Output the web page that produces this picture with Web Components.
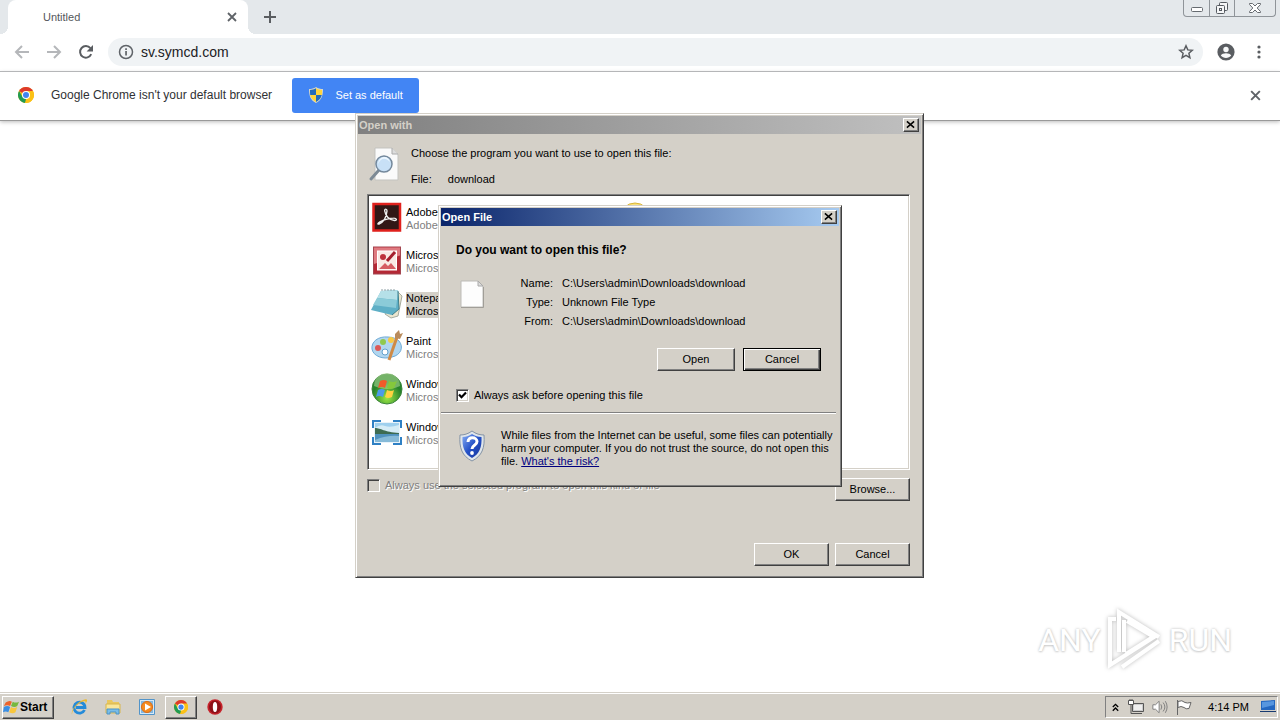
<!DOCTYPE html>
<html lang="en">
<head>
<meta charset="utf-8">
<title>Untitled</title>
<style>
	body {
		margin: 0;
		font: 11px/13px "Liberation Sans", Arial, sans-serif;
		color: #000;
		background: #fff;
	}
</style>
</head>
<body>
<desk-top></desk-top>

<script>
const icons = {
	back: ['0 0 16 16', '<path d="M15 8H2M8 2L2 8l6 6" fill="none" stroke="#b5b7ba" stroke-width="2"/>'],
	forward: ['0 0 16 16', '<path d="M1 8h13M8 2l6 6-6 6" fill="none" stroke="#b5b7ba" stroke-width="2"/>'],
	reload: ['0 0 16 16', '<path d="M13.2 10.2A5.8 5.8 0 1 1 12.4 4.2" fill="none" stroke="#5a5d61" stroke-width="2"/><path d="M15 1v6.400H8.600z" fill="#5a5d61"/>'],
	info: ['0 0 16 16', '<circle cx="8" cy="8" r="6.500" fill="none" stroke="#5f6368" stroke-width="1.500"/><path d="M7.200 7h1.700v4.500H7.200zM7.200 4.300h1.700V6H7.200z" fill="#5f6368"/>'],
	star: ['0 0 16 16', '<path d="M8 1.800l1.800 4.100 4.500.4-3.400 3 1 4.400L8 11.400l-3.900 2.300 1-4.400-3.400-3 4.500-.4z" fill="none" stroke="#5a5d61" stroke-width="1.500"/>'],
	user: ['0 0 18 18', '<circle cx="9" cy="9" r="8.600" fill="#5a5d61"/><circle cx="9" cy="6.500" r="2.700" fill="#f8f9fa"/><path d="M3.800 12.600c1.500-3 8.900-3 10.400 0-2.400 3.300-8 3.300-10.400 0z" fill="#f8f9fa"/>'],
	dots: ['0 0 16 16', '<g fill="#5a5d61"><circle cx="8" cy="3" r="1.600"/><circle cx="8" cy="8" r="1.600"/><circle cx="8" cy="13" r="1.600"/></g>'],
	cross: ['0 0 12 12', '<path d="M2 2l8 8M10 2l-8 8" stroke="#5f6368" stroke-width="1.800"/>'],
	plus: ['0 0 14 14', '<path d="M7 1v12M1 7h12" stroke="#5a5d61" stroke-width="2"/>'],
	close: ['0 0 10 9', '<path d="M1 1l8 7M9 1L1 8" stroke="#000" stroke-width="1.700"/>'],
	min: ['0 0 14 8', '<rect x="1.500" y="3.500" width="11" height="4" rx="1" fill="#fff" stroke="#666b70"/>'],
	restore: ['0 0 14 14', '<g fill="#f5f6f7" stroke="#555a60"><rect x="4.500" y="1.500" width="8" height="8" rx="1"/><rect x="1.500" y="4.500" width="8" height="8" rx="1"/><rect x="4.500" y="7.500" width="2" height="2"/></g>'],
	quit: ['0 0 14 12', '<path d="M1.500 1.500h3L7 4l2.500-2.500h3v1L9.200 6l3.300 3.500v1h-3L7 8l-2.500 2.500h-3v-1L4.800 6 1.500 2.500z" fill="#fff" stroke="#666b70"/>'],
	chrome: ['0 0 16 16', '<circle cx="8" cy="8" r="8" fill="#fbc116"/><path d="M8 8L1.070 4A8 8 0 0 1 14.930 4z" fill="#dd3a2b"/><path d="M8 8v4L7 15.940A8 8 0 0 1 1.070 4l3.500 6z" fill="#219b52"/><path d="M8 4h6.930A8 8 0 0 1 7 15.940L11.500 10z" fill="#fbc116"/><circle cx="8" cy="8" r="4" fill="#fff"/><circle cx="8" cy="8" r="3" fill="#4184ef"/>'],
	uac: ['0 0 14 16', '<path d="M7 0c2 1.500 4.500 2 7 2 0 6-1 11-7 14C1 13 0 8 0 2c2.500 0 5-.5 7-2z" fill="#d8d8c8"/><path d="M7 1.300V8H1.200C1 6.400 1 4.600 1 3c2.200 0 4.200-.5 6-1.700zM7 8h5.800c-.7 3-2.500 5.300-5.800 6.900z" fill="#236bbb"/><path d="M7 1.300C8.800 2.500 10.800 3 13 3c0 1.600 0 3.400-.2 5H7zM7 8v6.900C3.700 13.300 1.900 11 1.200 8z" fill="#ffd53c"/>'],
	search: ['0 0 34 36', '<path d="M7 2h17l6 6v26H7z" fill="#fafafa" stroke="#c3c3bf"/><path d="M24 2v6h6" fill="#ddd" stroke="#aaa"/><path d="M11 24L3 33" stroke="#7d8a95" stroke-width="3" stroke-linecap="round"/><circle cx="16" cy="18" r="8" fill="#c8e0f6" stroke="#74889b" stroke-width="1.500"/><path d="M10 18c3-6 7-7 12-2-2-8-11-6-12 2z" fill="#edf7ff"/>'],
	page: ['0 0 24 28', '<path d="M1 1h17l5 5v21H1z" fill="#fdfdfd" stroke="#bdbcb8"/><path d="M18 1v5h5z" fill="#ddd" stroke="#aaa"/><path d="M1 27.500h22.500V7" fill="none" stroke="#a19e98"/>'],
	adobe: ['0 0 32 32', '<rect x="2.500" y="3" width="26.500" height="26.500" fill="#311716" stroke="#e0211d" stroke-width="2.500"/><path d="M8 23c5-2 7.500-8 8-13 0-2.500-2.600-2.500-2.300 0 .8 5 4.600 9 9.900 9.500 3-.2 2-2.500-1-2.400-4.600 0-9.200 1.500-13.700 3.700-2.500 1.400-2.500 2.700-.9 2.200z" fill="none" stroke="#eee" stroke-width="1.400"/>'],
	picture: ['0 0 32 32', '<rect x="2.500" y="3" width="27" height="27" fill="#b42835" stroke="#a34650"/><path d="M3 3.500h26v8L3 20z" fill="#df7a80"/><rect x="6.500" y="7" width="19" height="19" fill="#f9e9e5" stroke="#fff"/><circle cx="12" cy="13" r="3" fill="#bd313c"/><path d="M16 17l8-9" stroke="#a51e2d" stroke-width="3"/><path d="M8 25l6-6 3 3 3-3 5 6z" fill="#d65b62"/>'],
	notepad: ['0 0 32 32', '<path d="M26 4l5 5-4 20-7 2-6-4z" fill="#ece6cf" stroke="#a7aca0"/><path d="M10 4l17-1 1 19-7 6L0 23z" fill="#5eafc6"/><path d="M10 4l17-1-1 10-20-2z" fill="#b5e0e8"/><path d="M6 11l20 2-1 8L2 18z" fill="#8bcbd8"/><path d="M11 4V2m3 2V2m3 2V2m3 2V2m3 2V2" stroke="#8fa1a6"/><path d="M27 4l1 18-7 6" fill="none" stroke="#3f7e8b"/>'],
	paint: ['0 0 32 32', '<path d="M17 7C7 6 0 12 1 19c1 7 11 11 20 8 9-2 12-10 7-16-2-2-6-4-11-4z" fill="#b1d6ef" stroke="#6eaad6"/><circle cx="12" cy="12" r="3" fill="#91c94e"/><circle cx="20" cy="10" r="3" fill="#f8ca45"/><circle cx="7" cy="18" r="3" fill="#dc5957"/><circle cx="14" cy="22" r="3" fill="#fff" stroke="#63a0cb"/><path d="M18 30L26 7" stroke="#d08a45" stroke-width="3"/><path d="M24 8l0-4 4-4 1 4 3-1-3 6z" fill="#b98b5c"/>'],
	media: ['0 0 32 32', '<defs><radialGradient id="g" cy=".8"><stop stop-color="#9ae745"/><stop offset="1" stop-color="#28832a"/></radialGradient></defs><circle cx="16" cy="16" r="15" fill="url(#g)" stroke="#3b843a"/><path d="M3 13a13 13 0 0 1 26 0c-8 4-17 4-26 0z" fill="#c0e4a6" opacity=".5"/><path d="M9 8q4-2 7 0l-2 7q-3-2-7 0z" fill="#f05a2a"/><path d="M18 8q4 2 8 0l-3 7q-4 2-7 0z" fill="#85c83c"/><path d="M7 17q4-2 7 0l-2 7q-4-2-7 0z" fill="#4c9bea"/><path d="M16 17q4 2 7 0l-2 7q-4 2-7 0z" fill="#ffd241"/>'],
	photo: ['0 0 32 32', '<path d="M1 4h9v4H5v4H1zM22 4h9v8h-4V8h-5zM1 21h4v5h5v3H1zM27 21h4v8h-9v-3h5z" fill="#2f80c4"/><rect x="3.500" y="6.500" width="25" height="20" fill="#9fd0ee" stroke="#e8f3fa"/><path d="M4 12q5-4 10-2t14-1v8H4z" fill="#d5ecf6"/><path d="M4 12c6 0 9 4 24 5v2H4z" fill="#3d6b52"/><path d="M4 18h24v8H4z" fill="#4f91bd"/><path d="M4 24q12-5 24-4v6H4z" fill="#86bad8"/>'],
	folder: ['0 0 32 32', '<circle cx="16" cy="17" r="15" fill="#f8e27d" stroke="#d9b437"/>'],
	shield: ['0 0 28 32', '<defs><linearGradient id="s" x2="1" y2="1"><stop stop-color="#86aef5"/><stop offset=".5" stop-color="#2451c7"/><stop offset="1" stop-color="#17349a"/></linearGradient></defs><path d="M14 1c4 3 8 4 12 4 1 13-2 21-12 26C4 26 1 18 2 5c4 0 8-1 12-4z" fill="#dfe5ea" stroke="#8493a5"/><path d="M14 4c3 2 6 3 9.500 3 .5 10-2 17-9.500 21C6.500 24 4 17 4.500 7 8 7 11 6 14 4z" fill="url(#s)"/><path d="M10 12c0-6 9-5 9-.5 0 4-5 3.500-5 7.500" fill="none" stroke="#fff" stroke-width="3"/><circle cx="14" cy="23" r="1.900" fill="#fff"/>'],
	start: ['0 0 18 16', '<path d="M3 3q4-3 7-1L8 7Q5 5 1 7z" fill="#ec632b"/><path d="M11 2q3 2 7 0l-2 5q-3 2-7 0z" fill="#76b83d"/><path d="M1 8q4-2 7 0l-2 6q-3-2-6 0z" fill="#3a8ee3"/><path d="M9 8q3 2 7 0l-2 6q-3 2-7 0z" fill="#f8c63c"/>'],
	ie: ['0 0 16 16', '<path d="M13.500 11A5.500 5.500 0 1 1 14 8.500H5" fill="none" stroke="#258bd9" stroke-width="2.800"/><path d="M1 15.500C-1 11 9 0 15 .2c2 .2 1 3-1 5 1-2 1-3-1-3C8 2.500 1 10 1 15.500z" fill="#edb92e"/>'],
	explorer: ['0 0 16 16', '<path d="M2 4V1h5l1 2h6v11H2z" fill="#e9c75e"/><path d="M1 5h14v9H1z" fill="#f9e69a" stroke="#d7b54c"/><path d="M2 15v-5h12v5h-3v-2H5v2z" fill="#79bde8" stroke="#4c93c6"/>'],
	player: ['0 0 16 16', '<path d="M.500 .500h15v15H.500z" fill="#d5e9f7" stroke="#5294c9"/><path d="M2 2h12v12H2z" fill="#82b7df"/><circle cx="8" cy="8" r="5.500" fill="#f58b1f" stroke="#dd6b12"/><path d="M6 4.500l6 3.500-6 3.500z" fill="#fff"/>'],
	opera: ['0 0 16 16', '<circle cx="8" cy="8" r="7.700" fill="#c6222a"/><ellipse cx="8" cy="8" rx="6" ry="6.500" fill="#8d1118"/><ellipse cx="8" cy="8" rx="2.200" ry="5" fill="#fff"/>'],
	chevrons: ['0 0 8 10', '<path d="M1 4.500l3-3 3 3M1 8.500l3-3 3 3" fill="none" stroke="#000" stroke-width="1.500"/>'],
	network: ['0 0 16 16', '<path d="M4.500 4.500h11v8h-11z" fill="#ccc" stroke="#555"/><path d="M6 6h8v5H6z" fill="#eee"/><path d="M7 14.500h7M3 6v8.500h4" fill="none" stroke="#555"/><path d="M.500 1.500h5v4h-5zM2 0v2M4 0v2" fill="#fff" stroke="#555"/>'],
	sound: ['0 0 18 16', '<path d="M1 5.500h3l4-4v13l-4-4H1z" fill="#fff" stroke="#777"/><path d="M10 5q2 3 0 6M12.500 3q4 5 0 10M15 1.500q4 6.500 0 13" fill="none" stroke="#777"/>'],
	flag: ['0 0 16 16', '<path d="M1.500 1v15M2 2.500q4-2 7 1 2 1 6 0l-2 6q-3 1-5-1-3-2-6 0z" fill="#fff" stroke="#666"/>'],
	screen: ['0 0 16 16', '<path d="M1 2l14-1v10H1z" fill="#2467c0"/><path d="M2 3l12-1v4L2 9z" fill="#5796df"/><path d="M0 12h16v1H0z" fill="#173a70"/>']
};

function define(name, html, setup) {
	const template = document.createElement('template');
	template.innerHTML = html;
	customElements.define(name, class extends HTMLElement {
		constructor() {
			super();
			this.attachShadow({mode: 'open'}).append(template.content.cloneNode(true));
		}
		connectedCallback() {
			if (setup) setup(this, this.shadowRoot);
		}
	});
}

define('ui-icon', `
	<style>
		:host {
			display: block;
			flex: none;
			width: var(--size, 16px);
			height: var(--size, 16px);
		}
		svg {
			display: block;
			width: 100%;
			height: 100%;
		}
	</style>
	<svg aria-hidden="true"></svg>
`, (host, root) => {
	const [box, shapes] = icons[host.getAttribute('name')];
	const svg = root.querySelector('svg');
	svg.setAttribute('viewBox', box);
	svg.innerHTML = shapes;
});

define('tab-strip', `
	<style>
		:host {
			display: flex;
			justify-content: space-between;
			height: 34px;
			background: #e4e8eb;
		}
		.tabs {
			display: flex;
			align-items: center;
			padding-left: 8px;
			gap: 15px;
		}
		.tab {
			display: flex;
			align-items: center;
			justify-content: space-between;
			box-sizing: border-box;
			width: 240px;
			height: 34px;
			padding: 0 10px 0 35px;
			color: #54575b;
			background: #fff;
			border-radius: 8px 8px 0 0;
			position: relative;
		}
		.tab::before, .tab::after {
			content: "";
			position: absolute;
			bottom: 0;
			width: 8px;
			height: 8px;
		}
		.tab::before {
			right: 100%;
			background: radial-gradient(circle at 0 0, #e4e8eb 8px, #fff 8px);
		}
		.tab::after {
			left: 100%;
			background: radial-gradient(circle at 100% 0, #e4e8eb 8px, #fff 8px);
		}
		button {
			padding: 0;
			border: 0;
			background: none;
		}
		.controls {
			display: flex;
			height: 16px;
			margin-right: 4px;
			border: 1px solid #8f9499;
			border-top: 0;
			border-radius: 0 0 4px 4px;
		}
		.controls button {
			display: grid;
			place-items: center;
			width: 25px;
			--size: 14px;
		}
		.controls button + button {
			border-left: 1px solid #8f9499;
		}
		.controls .quit {
			width: 41px;
		}
	</style>
	<div class="tabs">
		<div class="tab">
			<span>Untitled</span>
			<button aria-label="Close tab"><ui-icon name="cross" style="--size: 12px"></ui-icon></button>
		</div>
		<button aria-label="New tab"><ui-icon name="plus" style="--size: 14px"></ui-icon></button>
	</div>
	<div class="controls">
		<button aria-label="Minimize"><ui-icon name="min"></ui-icon></button>
		<button aria-label="Restore"><ui-icon name="restore"></ui-icon></button>
		<button class="quit" aria-label="Close"><ui-icon name="quit"></ui-icon></button>
	</div>
`);

define('tool-bar', `
	<style>
		:host {
			display: flex;
			align-items: center;
			gap: 16px;
			height: 35px;
			padding: 0 13px 2px 14px;
			border-bottom: 1px solid #b3b5b7;
		}
		button {
			padding: 0;
			border: 0;
			background: none;
		}
		.address {
			display: flex;
			align-items: center;
			flex: 1;
			gap: 7px;
			height: 28px;
			padding: 0 9px 0 10px;
			margin: 0 -2px;
			border-radius: 14px;
			background: #f0f3f5;
		}
		input {
			flex: 1;
			min-width: 0;
			padding: 0;
			border: 0;
			background: none;
			color: #202124;
			font: 14px/18px "Liberation Sans", Arial, sans-serif;
		}
	</style>
	<button aria-label="Back"><ui-icon name="back"></ui-icon></button>
	<button aria-label="Forward"><ui-icon name="forward"></ui-icon></button>
	<button aria-label="Reload"><ui-icon name="reload"></ui-icon></button>
	<div class="address">
		<ui-icon name="info"></ui-icon>
		<input value="sv.symcd.com" aria-label="Address">
		<button aria-label="Bookmark"><ui-icon name="star"></ui-icon></button>
	</div>
	<button aria-label="Profile"><ui-icon name="user" style="--size: 18px"></ui-icon></button>
	<button aria-label="Menu"><ui-icon name="dots"></ui-icon></button>
`);

define('info-bar', `
	<style>
		:host {
			display: flex;
			align-items: center;
			height: 46px;
			padding: 0 18px 2px;
			border-bottom: 1px solid #999;
			box-shadow: 0 1px 4px #bbb;
			font-size: 12px;
			color: #303134;
		}
		.text {
			margin: 0 20px 0 17px;
		}
		button {
			padding: 0;
			border: 0;
			background: none;
		}
		.set {
			display: flex;
			align-items: center;
			justify-content: center;
			gap: 11px;
			width: 127px;
			height: 35px;
			border-radius: 3px;
			background: #4285f4;
			color: #fff;
			font: 11px/13px "Liberation Sans", Arial, sans-serif;
		}
		.dismiss {
			margin-left: auto;
		}
	</style>
	<ui-icon name="chrome"></ui-icon>
	<span class="text">Google Chrome isn't your default browser</span>
	<button class="set"><ui-icon name="uac"></ui-icon>Set as default</button>
	<button class="dismiss" aria-label="Dismiss"><ui-icon name="cross" style="--size: 13px"></ui-icon></button>
`);

define('classic-button', `
	<style>
		:host {
			display: block;
			width: var(--width, 75px);
			height: 23px;
		}
		button {
			width: 100%;
			height: 100%;
			padding: 0;
			border: 1px solid;
			border-color: #fff #404040 #404040 #fff;
			box-shadow: inset -1px -1px #808080;
			background: #d4d0c8;
			color: #000;
			font: inherit;
		}
		:host([default]) button {
			border-color: #000;
			box-shadow: inset 1px 1px #fff, inset -1px -1px #404040, inset -2px -2px #808080;
		}
	</style>
	<button><slot></slot></button>
`);

define('classic-check', `
	<style>
		:host {
			display: block;
		}
		label {
			display: flex;
			align-items: center;
			gap: 5px;
			height: 14px;
			white-space: nowrap;
		}
		input {
			appearance: none;
			width: 13px;
			height: 13px;
			margin: 0;
			border: 1px solid;
			border-color: #808080 #fff #fff #808080;
			box-shadow: inset 1px 1px #404040, inset -1px -1px #d4d0c8;
			background: #fff;
		}
		input:checked {
			background: #fff url("data:image/svg+xml,%3Csvg xmlns='http://www.w3.org/2000/svg' viewBox='0 0 11 11'%3E%3Cpath d='M2 4.500l2.500 2.700 4.500-4.700' fill='none' stroke='black' stroke-width='2.200'/%3E%3C/svg%3E");
		}
		:host([disabled]) {
			color: #808080;
			text-shadow: 1px 1px #fff;
		}
		:host([disabled]) input {
			background: #d4d0c8;
		}
	</style>
	<label><input type="checkbox"><span><slot></slot></span></label>
`, (host, root) => {
	const input = root.querySelector('input');
	input.checked = host.hasAttribute('checked');
	input.disabled = host.hasAttribute('disabled');
});

define('classic-window', `
	<style>
		:host {
			display: block;
			box-sizing: border-box;
			padding: 2px;
			border: 1px solid;
			border-color: #d4d0c8 #404040 #404040 #d4d0c8;
			box-shadow: inset 1px 1px #fff, inset -1px -1px #808080;
			background: #d4d0c8;
			--title: linear-gradient(90deg, #808080, #c0c0c0);
			--title-color: #d4d0c8;
		}
		:host([active]) {
			--title: linear-gradient(90deg, #0a246a, #a6caf0);
			--title-color: #fff;
		}
		header {
			display: flex;
			align-items: center;
			justify-content: space-between;
			height: 18px;
			padding: 0 2px 0 1px;
			background: var(--title);
			color: var(--title-color);
			font-weight: bold;
		}
		button {
			display: grid;
			place-items: center;
			width: 16px;
			height: 14px;
			padding: 0 1px 1px 0;
			border: 1px solid;
			border-color: #fff #404040 #404040 #fff;
			box-shadow: inset -1px -1px #808080;
			background: #d4d0c8;
			--size: 9px;
		}
	</style>
	<header>
		<span><slot name="title"></slot></span>
		<button aria-label="Close"><ui-icon name="close"></ui-icon></button>
	</header>
	<slot></slot>
`);

define('program-item', `
	<style>
		:host {
			display: flex;
			align-items: center;
			gap: 3px;
			height: 43px;
			white-space: nowrap;
			--size: 32px;
		}
		::slotted(ui-icon) {
			margin-bottom: 3px;
		}
		.maker {
			color: #808080;
		}
		:host([selected]) .text {
			background: #d4d0c8;
		}
		:host([selected]) .maker {
			color: #000;
		}
	</style>
	<slot name="icon"></slot>
	<div class="text">
		<div><slot></slot></div>
		<div class="maker"><slot name="maker"></slot></div>
	</div>
`);

define('open-with', `
	<style>
		:host {
			display: block;
		}
		.body {
			padding: 6px 11px 9px 9px;
		}
		.head {
			display: flex;
			align-items: center;
			gap: 8px;
			line-height: 26px;
			margin-bottom: 2px;
		}
		.head ui-icon {
			margin-bottom: 4px;
			--size: 36px;
		}
		.file {
			display: flex;
			gap: 16px;
		}
		.list {
			display: grid;
			grid-template-columns: 248px 1fr;
			align-items: start;
			box-sizing: border-box;
			height: 276px;
			padding: 1px;
			border: 1px solid;
			border-color: #808080 #fff #fff #808080;
			box-shadow: inset 1px 1px #404040, inset -1px -1px #d4d0c8;
			background: #fff;
		}
		.column {
			padding: 1px 2px;
		}
		.options, .buttons {
			display: flex;
			justify-content: space-between;
			padding-top: 8px;
		}
		.buttons {
			justify-content: flex-end;
			gap: 6px;
			padding-top: 42px;
		}
	</style>
	<classic-window>
		<span slot="title">Open with</span>
		<div class="body">
			<div class="head">
				<ui-icon name="search"></ui-icon>
				<div>
					<div>Choose the program you want to use to open this file:</div>
					<div class="file"><span>File:</span><span>download</span></div>
				</div>
			</div>
			<div class="list">
				<div class="column">
					<program-item><ui-icon slot="icon" name="adobe"></ui-icon>Adobe<span slot="maker">Adobe</span></program-item>
					<program-item><ui-icon slot="icon" name="picture"></ui-icon>Microsoft<span slot="maker">Microsoft</span></program-item>
					<program-item selected><ui-icon slot="icon" name="notepad"></ui-icon>Notepad<span slot="maker">Microsoft</span></program-item>
					<program-item><ui-icon slot="icon" name="paint"></ui-icon>Paint<span slot="maker">Microsoft</span></program-item>
					<program-item><ui-icon slot="icon" name="media"></ui-icon>Windows<span slot="maker">Microsoft</span></program-item>
					<program-item><ui-icon slot="icon" name="photo"></ui-icon>Windows<span slot="maker">Microsoft</span></program-item>
				</div>
				<div class="column">
					<program-item><ui-icon slot="icon" name="folder"></ui-icon></program-item>
				</div>
			</div>
			<div class="options">
				<classic-check disabled>Always use the selected program to open this kind of file</classic-check>
				<classic-button>Browse...</classic-button>
			</div>
			<div class="buttons">
				<classic-button>OK</classic-button>
				<classic-button>Cancel</classic-button>
			</div>
		</div>
	</classic-window>
`);

define('open-file', `
	<style>
		:host {
			display: block;
		}
		.body {
			padding: 16px 18px 0 15px;
		}
		h1 {
			margin: 0 0 16px;
			font-size: 12px;
			line-height: 16px;
		}
		.details {
			display: flex;
			align-items: flex-start;
			padding-left: 2px;
		}
		.details ui-icon {
			margin-top: 6px;
			--size: 28px;
		}
		dl {
			display: grid;
			grid-template-columns: 67px 1fr;
			column-gap: 9px;
			margin: 0;
			line-height: 19px;
		}
		dt {
			text-align: right;
		}
		dd {
			margin: 0;
		}
		.buttons {
			display: flex;
			justify-content: flex-end;
			gap: 8px;
			margin: 17px 0;
			--width: 78px;
		}
		hr {
			margin: 10px 3px 15px 0;
			border: 0;
			border-top: 1px solid #808080;
			border-bottom: 1px solid #fff;
		}
		.risk {
			display: flex;
			gap: 13px;
			padding: 0 2px 16px 15px;
		}
		.risk ui-icon {
			margin-top: 1px;
			--size: 32px;
		}
		p {
			margin: 0;
		}
		a {
			color: #00007f;
		}
	</style>
	<classic-window active>
		<span slot="title">Open File</span>
		<div class="body">
			<h1>Do you want to open this file?</h1>
			<div class="details">
				<ui-icon name="page"></ui-icon>
				<dl>
					<dt>Name:</dt><dd>C:\\Users\\admin\\Downloads\\download</dd>
					<dt>Type:</dt><dd>Unknown File Type</dd>
					<dt>From:</dt><dd>C:\\Users\\admin\\Downloads\\download</dd>
				</dl>
			</div>
			<div class="buttons">
				<classic-button>Open</classic-button>
				<classic-button default>Cancel</classic-button>
			</div>
			<classic-check checked>Always ask before opening this file</classic-check>
		</div>
		<hr>
		<div class="risk">
			<ui-icon name="shield"></ui-icon>
			<p>While files from the Internet can be useful, some files can potentially harm your computer. If you do not trust the source, do not open this file. <a href="#">What's the risk?</a></p>
		</div>
	</classic-window>
`);

define('water-mark', `
	<style>
		:host {
			display: flex;
			align-items: center;
			gap: 4px;
			color: #fff;
			font: 32px/48px Roboto, "Liberation Sans", sans-serif;
			text-shadow: 0 0 3px #bbb, 0 1px 2px #ddd;
		}
		svg {
			width: 60px;
			height: 64px;
			filter: drop-shadow(0 0 2px #bbb);
		}
	</style>
	<span>ANY</span>
	<svg viewBox="0 0 58 64" fill="none" stroke="#fff" stroke-width="4" aria-hidden="true">
		<path d="M13 44V4l40 25M18 12v32M53 33L16 59M10 11H4v46l44-28L21 13M20 46l27-17"/>
	</svg>
	<span>RUN</span>
`);

define('task-bar', `
	<style>
		:host {
			display: flex;
			align-items: center;
			height: 26px;
			border-top: 1px solid #fff;
			box-shadow: 0 -1px #d4d0c8;
			background: #d4d0c8;
			padding: 0 2px;
		}
		button {
			display: grid;
			place-items: center;
			width: 32px;
			height: 23px;
			padding: 0;
			border: 1px solid transparent;
			background: none;
			font: inherit;
		}
		.start {
			display: flex;
			align-items: center;
			gap: 1px;
			width: 52px;
			font-size: 12px;
			font-weight: bold;
		}
		.start, .open {
			border-color: #fff #404040 #404040 #fff;
			box-shadow: inset -1px -1px #808080;
		}
		.apps {
			display: flex;
			gap: 2px;
			padding-left: 9px;
		}
		.tray {
			display: flex;
			align-items: center;
			gap: 8px;
			height: 20px;
			margin-left: auto;
			padding: 0 1px 0 5px;
			border: 1px solid;
			border-color: #808080 #fff #fff #808080;
		}
		time {
			margin: 0 3px 0 8px;
		}
	</style>
	<button class="start"><ui-icon name="start"></ui-icon>Start</button>
	<div class="apps">
		<button aria-label="Internet Explorer"><ui-icon name="ie"></ui-icon></button>
		<button aria-label="Explorer"><ui-icon name="explorer"></ui-icon></button>
		<button aria-label="Media Player"><ui-icon name="player"></ui-icon></button>
		<button class="open" aria-label="Chrome"><ui-icon name="chrome" style="--size: 14px"></ui-icon></button>
		<button aria-label="Opera"><ui-icon name="opera"></ui-icon></button>
	</div>
	<div class="tray">
		<ui-icon name="chevrons" style="--size: 9px"></ui-icon>
		<ui-icon name="network"></ui-icon>
		<ui-icon name="sound"></ui-icon>
		<ui-icon name="flag"></ui-icon>
		<time>4:14 PM</time>
		<ui-icon name="screen"></ui-icon>
	</div>
`);

define('desk-top', `
	<style>
		:host {
			display: flex;
			flex-direction: column;
			min-height: 100vh;
			position: relative;
			overflow: hidden;
		}
		main {
			flex: 1;
		}
		open-with, open-file, water-mark {
			position: absolute;
		}
		open-with {
			left: 355px;
			top: 113px;
			width: 569px;
		}
		open-file {
			left: 438px;
			top: 205px;
			width: 404px;
		}
		water-mark {
			right: 48px;
			bottom: 48px;
		}
	</style>
	<tab-strip></tab-strip>
	<tool-bar></tool-bar>
	<info-bar></info-bar>
	<main></main>
	<task-bar></task-bar>
	<water-mark></water-mark>
	<open-with></open-with>
	<open-file></open-file>
`);
</script>
</body>
</html>
